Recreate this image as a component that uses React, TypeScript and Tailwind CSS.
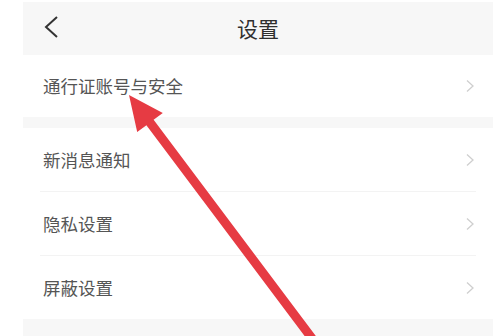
import React from 'react';

const font = { fontFamily: '"Noto Sans CJK SC", "Noto Sans", sans-serif' };

function Chevron() {
  return (
    <svg width="10" height="14" viewBox="0 0 10 14" className="shrink-0">
      <path d="M2 1.5 L8 7 L2 12.5" fill="none" stroke="#cfcfcf" strokeWidth="1.3" />
    </svg>
  );
}

function Row({ label, last }: { label: string; last?: boolean }) {
  return (
    <div className="flex flex-col">
      <div className="flex h-[63px] items-center justify-between pl-[20px] pr-[18px]">
        <span className="text-[17.5px] leading-none text-[#555]">{label}</span>
        <Chevron />
      </div>
      {!last && <div className="mx-[17px] h-px bg-[#f3f3f3]" />}
    </div>
  );
}

export default function App() {
  return (
    <div
      className="relative h-[336px] w-[500px] overflow-hidden bg-white pl-[23px] pr-[7px] pt-[2px]"
      style={font}
    >
      <div className="flex h-full flex-col bg-[#f7f7f7]">
        {/* Header */}
        <div className="relative flex h-[53px] items-center justify-center">
          <svg
            width="17"
            height="24"
            viewBox="0 0 17 24"
            className="absolute left-[20px] top-[13px]"
          >
            <path d="M14 2 L3 12 L14 22" fill="none" stroke="#333" strokeWidth="2" />
          </svg>
          <span className="text-[21px] leading-none text-[#2f2f2f]">设置</span>
        </div>

        <div className="flex h-[62px] items-center justify-between bg-white pl-[20px] pr-[18px]">
          <span className="text-[17.5px] leading-none text-[#555]">通行证账号与安全</span>
          <Chevron />
        </div>

        <div className="h-[11px]" />

        <div className="flex flex-col bg-white">
          <Row label="新消息通知" />
          <Row label="隐私设置" />
          <Row label="屏蔽设置" last />
        </div>
      </div>

      {/* Annotation arrow */}
      <svg
        width="500"
        height="336"
        viewBox="0 0 500 336"
        className="pointer-events-none absolute left-0 top-0"
      >
        <polygon
          points="129,95 162.8,112.9 153.6,119.8 321.9,344.1 314.7,349.5 146.4,125.2 137.2,132.1"
          fill="#e63b43"
        />
      </svg>
    </div>
  );
}
